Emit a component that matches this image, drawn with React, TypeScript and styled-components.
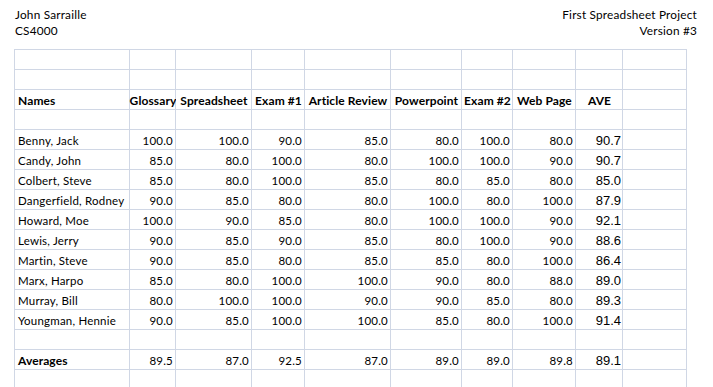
import React from "react";
import styled, { createGlobalStyle } from "styled-components";

const GlobalStyle = createGlobalStyle`
  body {
    margin: 0;
    background: #ffffff;
    font-family: Lato, "Liberation Sans", sans-serif;
    font-variant-ligatures: none;
    color: #000;
  }
`;

type Row = { name: string; scores: string[]; ave: string };

const columns = [
  "Names",
  "Glossary",
  "Spreadsheet",
  "Exam #1",
  "Article Review",
  "Powerpoint",
  "Exam #2",
  "Web Page",
  "AVE",
];

const students: Row[] = [
  { name: "Benny, Jack", scores: ["100.0", "100.0", "90.0", "85.0", "80.0", "100.0", "80.0"], ave: "90.7" },
  { name: "Candy, John", scores: ["85.0", "80.0", "100.0", "80.0", "100.0", "100.0", "90.0"], ave: "90.7" },
  { name: "Colbert, Steve", scores: ["85.0", "80.0", "100.0", "85.0", "80.0", "85.0", "80.0"], ave: "85.0" },
  { name: "Dangerfield, Rodney", scores: ["90.0", "85.0", "80.0", "80.0", "100.0", "80.0", "100.0"], ave: "87.9" },
  { name: "Howard, Moe", scores: ["100.0", "90.0", "85.0", "80.0", "100.0", "100.0", "90.0"], ave: "92.1" },
  { name: "Lewis, Jerry", scores: ["90.0", "85.0", "90.0", "85.0", "80.0", "100.0", "90.0"], ave: "88.6" },
  { name: "Martin, Steve", scores: ["90.0", "85.0", "80.0", "85.0", "85.0", "80.0", "100.0"], ave: "86.4" },
  { name: "Marx, Harpo", scores: ["85.0", "80.0", "100.0", "100.0", "90.0", "80.0", "88.0"], ave: "89.0" },
  { name: "Murray, Bill", scores: ["80.0", "100.0", "100.0", "90.0", "90.0", "85.0", "80.0"], ave: "89.3" },
  { name: "Youngman, Hennie", scores: ["90.0", "85.0", "100.0", "100.0", "85.0", "80.0", "100.0"], ave: "91.4" },
];

const averages = ["89.5", "87.0", "92.5", "87.0", "89.0", "89.0", "89.8"];
const overall = "89.1";

const COLS = 10;

const BlankRow: React.FC = () => (
  <>
    {Array.from({ length: COLS }).map((_, i) => (
      <Cell key={i} />
    ))}
  </>
);

const App: React.FC = () => {
  return (
    <>
      <GlobalStyle />
      <Page>
        <Header>
          <HeaderBlock>
            <div>John Sarraille</div>
            <div>CS4000</div>
          </HeaderBlock>
          <HeaderBlock $right>
            <div>First Spreadsheet Project</div>
            <div>Version #3</div>
          </HeaderBlock>
        </Header>
        <Sheet>
          <BlankRow />
          <BlankRow />
          {columns.map((c, i) => (
            <Cell key={c} $bold $align={i === 0 ? "left" : "center"}>
              {c}
            </Cell>
          ))}
          <Cell />
          <BlankRow />
          {students.map((s) => (
            <React.Fragment key={s.name}>
              <Cell>{s.name}</Cell>
              {s.scores.map((v, i) => (
                <Cell key={i} $align="right">
                  {v}
                </Cell>
              ))}
              <AveCell>{s.ave}</AveCell>
              <Cell />
            </React.Fragment>
          ))}
          <BlankRow />
          <Cell $bold>Averages</Cell>
          {averages.map((v, i) => (
            <Cell key={i} $align="right">
              {v}
            </Cell>
          ))}
          <AveCell>{overall}</AveCell>
          <Cell />
          <BlankRow />
        </Sheet>
      </Page>
    </>
  );
};

export default App;

const Page = styled.div`
  width: 713px;
  height: 387px;
  overflow: hidden;
  padding-left: 14px;
  box-sizing: border-box;
`;

const Header = styled.div`
  display: flex;
  justify-content: space-between;
  padding: 7px 16px 1px 1px;
  height: 49px;
  box-sizing: border-box;
  font-size: 11.8px;
  letter-spacing: 0.2px;
  line-height: 16px;
`;

const HeaderBlock = styled.div<{ $right?: boolean }>`
  text-align: ${(p) => (p.$right ? "right" : "left")};
`;

const Sheet = styled.div`
  display: grid;
  grid-template-columns: 114px 45px 75px 52px 85px 70px 50px 62px 46px 63px;
  grid-auto-rows: 19px;
  gap: 1px;
  padding: 1px;
  width: max-content;
  background: #d0d7e5;
`;

const Cell = styled.div<{ $align?: "left" | "right" | "center"; $bold?: boolean }>`
  background: #ffffff;
  display: flex;
  align-items: flex-end;
  justify-content: ${(p) =>
    p.$align === "right" ? "flex-end" : p.$align === "center" ? "center" : "flex-start"};
  padding: 0 2px 1px 3px;
  font-size: ${(p) => (p.$bold ? "12px" : "11.5px")};
  letter-spacing: ${(p) => (p.$bold ? "0.1px" : "0.2px")};
  font-weight: ${(p) => (p.$bold ? 700 : 400)};
  line-height: 14px;
  white-space: nowrap;
  overflow: visible;
  min-width: 0;
`;

const AveCell = styled(Cell).attrs({ $align: "right" as const })`
  font-family: "Liberation Sans", Arial, sans-serif;
  font-size: 13px;
  letter-spacing: 0;
  padding-right: 1px;
`;
